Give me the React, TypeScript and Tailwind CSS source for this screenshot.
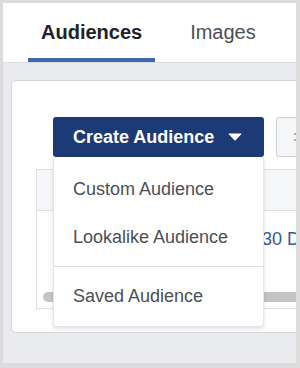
import React from "react";

export default function App() {
  const font = { fontFamily: '"Liberation Sans", Arial, Helvetica, sans-serif' };
  return (
    <div
      className="w-[300px] h-[368px] bg-[#dcdcdc] pt-[3px] pl-[3px] pr-[4px] pb-[5px]"
      style={font}
    >
      <div className="w-full h-full bg-[#e9ebee] flex flex-col overflow-hidden">
        {/* Tabs */}
        <div className="h-[59px] bg-white flex items-end pl-[25px] gap-[22px] shrink-0">
          <div className="flex flex-col">
            <div className="px-[13px] text-[20px] leading-[24px] font-bold text-[#1d2129]">
              Audiences
            </div>
            <div className="mt-[14px] h-[4px] bg-[#4267b2]" />
          </div>
          <div className="flex flex-col">
            <div className="px-[13px] text-[20px] leading-[24px] text-[#4b4f56]">
              Images
            </div>
            <div className="mt-[14px] h-[4px]" />
          </div>
        </div>
        {/* Content */}
        <div className="flex-1 border-t border-[#dddfe2] pt-[17px] pl-[8px]">
          <div className="w-[320px] h-[253px] bg-white border border-[#d3d6db] rounded-[5px] pt-[36px] pl-[24px] pb-[23px]">
            {/* Buttons row */}
            <div className="relative z-10 flex items-center gap-[12px] ml-[17px] h-[40px]">
              <div className="relative">
                <button className="w-[211px] h-[40px] bg-[#1c3a75] rounded-[3px] flex items-center pl-[20px] text-white text-[18px] font-bold">
                  <span className="leading-[21px]">Create Audience</span>
                  <svg
                    className="ml-[14px]"
                    width="14"
                    height="8"
                    viewBox="0 0 14 8"
                  >
                    <path d="M1 0.5 L13 0.5 Q13.8 0.5 13.2 1.2 L7.6 7.2 Q7 7.8 6.4 7.2 L0.8 1.2 Q0.2 0.5 1 0.5 Z" fill="#ffffff" />
                  </svg>
                </button>
                {/* Menu */}
                <div className="absolute left-0 top-full w-[211px] bg-white border-x border-b border-[#e3e5e8] rounded-b-[3px] shadow-[0_2px_4px_rgba(0,0,0,0.12)] pt-[8px] pb-[6px]">
                  <div className="h-[48px] flex items-center pl-[19px] text-[18px] leading-[21px] text-[#4b4f56]">
                    Custom Audience
                  </div>
                  <div className="h-[48px] flex items-center pl-[19px] text-[18px] leading-[21px] text-[#4b4f56]">
                    Lookalike Audience
                  </div>
                  <div className="mt-[5px] mb-[5px] h-px bg-[#dddfe2]" />
                  <div className="h-[48px] flex items-center pl-[19px] text-[18px] leading-[21px] text-[#4b4f56]">
                    Saved Audience
                  </div>
                </div>
              </div>
              <div className="w-[60px] h-[40px] bg-[#f5f6f7] border border-[#ccd0d5] rounded-[3px] flex items-center pl-[16px]">
                <svg width="10" height="12" viewBox="0 0 10 12">
                  <path d="M1 3 L5 3 M1 9 L5 9" stroke="#90949c" strokeWidth="1.5" />
                </svg>
              </div>
            </div>
            {/* Table */}
            <div className="mt-[12px] border-t border-l border-b border-[#dddfe2]">
              <div className="h-[41px] bg-[#f6f7f9] border-b border-[#dddfe2]" />
              <div className="h-[97px] flex flex-col">
                <div className="pt-[18px] pl-[225px] text-[18px] leading-[21px] text-[#365899] whitespace-nowrap">
                  30 Days
                </div>
                <div className="mt-[42px] ml-[6px] h-[10px] bg-[#c4c4c4] rounded-l-full" />
              </div>
            </div>
          </div>
        </div>
      </div>
    </div>
  );
}
